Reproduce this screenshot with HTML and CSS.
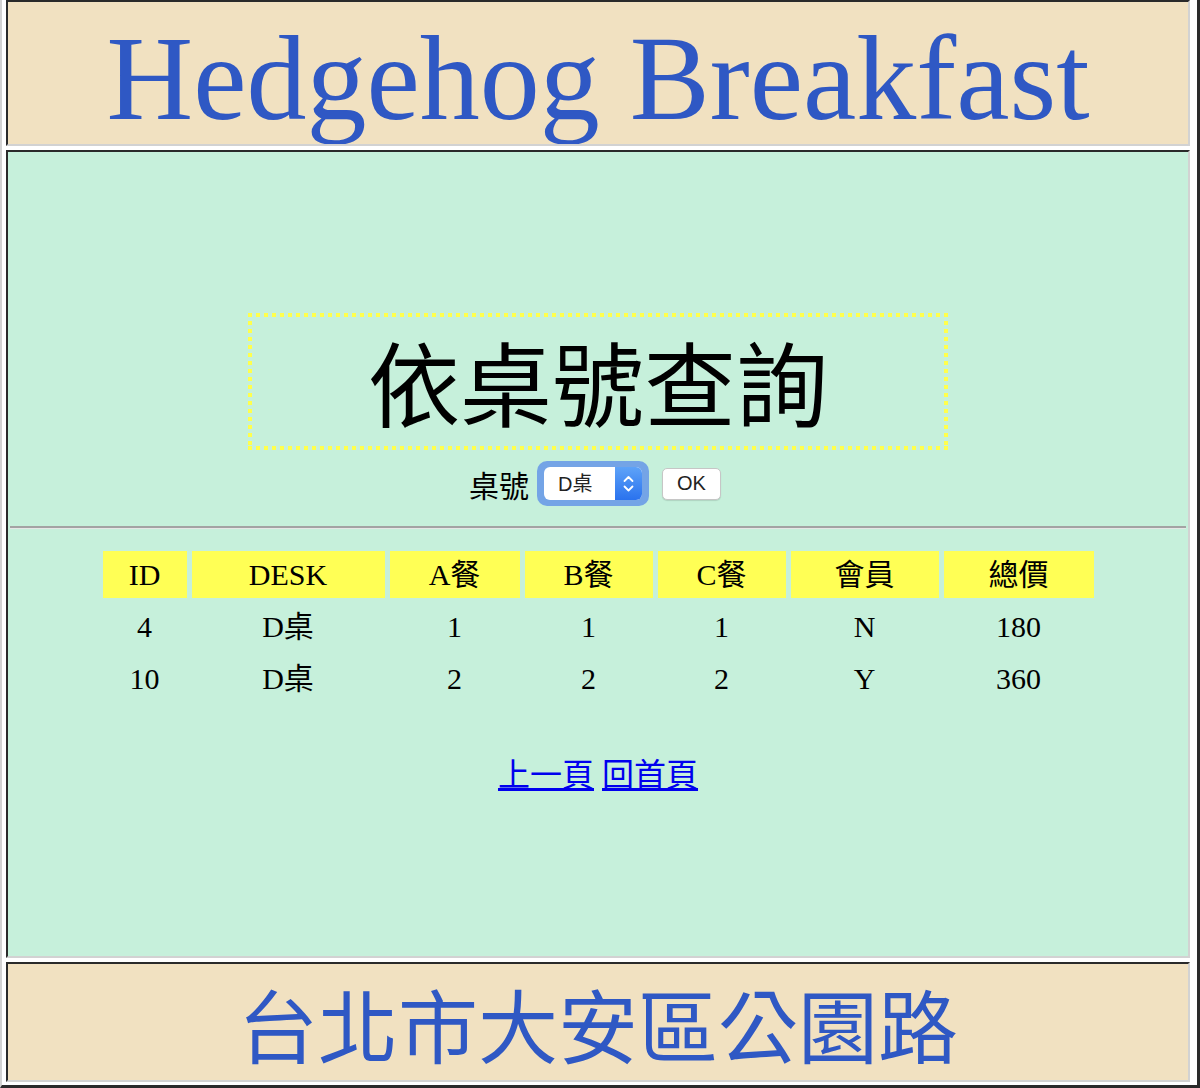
FILE: index.html
```html
<!DOCTYPE html>
<html lang="zh-Hant">
<head>
<meta charset="utf-8">
<title>Hedgehog Breakfast</title>
<link rel="stylesheet" href="styles.css">
</head>
<body>
<div class="page">
  <header class="cell head-cell">Hedgehog Breakfast</header>
  <main class="cell main-cell">
    <h1 class="title-box">依桌號查詢</h1>
    <form class="query-row">
      <label class="query-label" for="desk">桌號</label>
      <span class="select-ring">
        <span class="select-inner">
          <select id="desk" class="desk-select"><option>D桌</option></select>
          <span class="select-arrow">
            <svg width="27" height="33" viewBox="0 0 27 33"><path d="M9.5 14 L13.5 10 L17.5 14" fill="none" stroke="#fff" stroke-width="1.8" stroke-linecap="round" stroke-linejoin="round"/><path d="M9.5 19.5 L13.5 23.5 L17.5 19.5" fill="none" stroke="#fff" stroke-width="1.8" stroke-linecap="round" stroke-linejoin="round"/></svg>
          </span>
        </span>
      </span>
      <button type="button" class="ok-btn">OK</button>
    </form>
    <hr class="divider">
    <table class="orders">
      <colgroup>
        <col class="c-id"><col class="c-desk"><col class="c-a"><col class="c-b"><col class="c-c"><col class="c-mem"><col class="c-total">
      </colgroup>
      <thead>
        <tr><th>ID</th><th>DESK</th><th>A餐</th><th>B餐</th><th>C餐</th><th>會員</th><th>總價</th></tr>
      </thead>
      <tbody>
        <tr><td>4</td><td>D桌</td><td>1</td><td>1</td><td>1</td><td>N</td><td>180</td></tr>
        <tr><td>10</td><td>D桌</td><td>2</td><td>2</td><td>2</td><td>Y</td><td>360</td></tr>
      </tbody>
    </table>
    <p class="nav-links"><a href="#">上一頁</a> <a href="#">回首頁</a></p>
  </main>
  <footer class="cell foot-cell">台北市大安區公園路</footer>
</div>
</body>
</html>
```
FILE: styles.css
```css
html, body {
  margin: 0;
  padding: 0;
  background: #ffffff;
}

body {
  font-family: "Liberation Serif", "Noto Sans CJK TC", serif;
  color: #000;
}

.page {
  box-sizing: border-box;
  width: 1200px;
  height: 1088px;
  border-left: 2px solid #d2d2d2;
  border-right: 3px solid #2a2a2a;
  border-bottom: 3px solid #2a2a2a;
  padding: 0 7px 3px 4px;
  display: flex;
  flex-direction: column;
  gap: 4px;
}

.cell {
  box-sizing: border-box;
  border-top: 2px solid #2a2a2a;
  border-left: 2px solid #2a2a2a;
  border-bottom: 2px solid #d2d2d2;
  border-right: 2px solid #d2d2d2;
}

.head-cell {
  height: 146px;
  background: #f1e1c1;
  color: #2f58c4;
  font-size: 120px;
  line-height: 133px;
  padding-top: 10px;
  text-align: center;
  white-space: nowrap;
  overflow: hidden;
}

.main-cell {
  height: 808px;
  background: #c6f0db;
  padding-top: 161px;
  display: flex;
  flex-direction: column;
  align-items: center;
}

.title-box {
  box-sizing: border-box;
  width: 700px;
  height: 137px;
  margin: 0;
  padding-top: 12px;
  background:
    repeating-linear-gradient(90deg, #ffff4d 0 4px, transparent 4px 8px) left top / 100% 4px no-repeat,
    repeating-linear-gradient(90deg, #ffff4d 0 4px, transparent 4px 8px) left bottom / 100% 4px no-repeat,
    repeating-linear-gradient(180deg, #ffff4d 0 4px, transparent 4px 8px) left top / 4px 100% no-repeat,
    repeating-linear-gradient(180deg, #ffff4d 0 4px, transparent 4px 8px) right top / 4px 100% no-repeat;
  font-family: "Liberation Serif", "Noto Sans CJK TC", serif;
  font-weight: normal;
  font-size: 92px;
  line-height: 128px;
  text-align: center;
  color: #000;
  overflow: hidden;
}

.query-row {
  margin: 11px 0 0 0;
  height: 45px;
  display: flex;
  align-items: center;
  justify-content: center;
}

.query-label {
  font-size: 30px;
  margin-right: 8px;
  margin-left: -6px;
}

.select-ring {
  display: inline-flex;
  padding: 6px 7px;
  border-radius: 10px;
  background: #74a4e6;
}

.select-inner {
  position: relative;
  display: inline-block;
  width: 98px;
  height: 33px;
}

.desk-select {
  -webkit-appearance: none;
  appearance: none;
  box-sizing: border-box;
  width: 98px;
  height: 33px;
  margin: 0;
  border: none;
  border-radius: 6px;
  background: #ffffff;
  padding: 0 0 0 14px;
  font-family: "Liberation Sans", "Noto Sans CJK TC", sans-serif;
  font-size: 20px;
  color: #222;
  outline: none;
}

.select-arrow {
  position: absolute;
  top: 0;
  right: 0;
  width: 27px;
  height: 33px;
  border-radius: 0 6px 6px 0;
  background: linear-gradient(#5ea3f8, #2a72ee);
  display: flex;
}

.ok-btn {
  box-sizing: border-box;
  width: 59px;
  height: 32px;
  margin-left: 13px;
  padding: 0;
  border: 1px solid #c6c6c6;
  border-radius: 5px;
  background: #ffffff;
  box-shadow: 0 1px 1px rgba(0, 0, 0, 0.12);
  font-family: "Liberation Sans", sans-serif;
  font-size: 20px;
  color: #222;
}

.divider {
  align-self: stretch;
  margin: 20px 2px 0 2px;
  height: 0;
  border: none;
  border-top: 2px solid #a3a3a3;
  border-bottom: 1px solid #e6e6e6;
}

.orders {
  margin-top: 17px;
  border-spacing: 5px;
  table-layout: fixed;
  font-size: 30px;
}

.c-id { width: 84px; }
.c-desk { width: 193px; }
.c-a { width: 130px; }
.c-b { width: 128px; }
.c-c { width: 128px; }
.c-mem { width: 148px; }
.c-total { width: 150px; }

.orders th,
.orders td {
  height: 47px;
  padding: 0;
  text-align: center;
  vertical-align: middle;
  font-weight: normal;
  line-height: 47px;
}

.orders th {
  background: #ffff55;
}

.nav-links {
  margin: 45px 0 0 0;
  font-size: 32px;
  line-height: 46px;
}

.nav-links a {
  color: #0000ee;
  text-decoration: underline;
}

.foot-cell {
  height: 120px;
  background: #f1e1c1;
  color: #2f58c4;
  font-family: "Noto Sans CJK TC", sans-serif;
  font-size: 80px;
  display: flex;
  align-items: center;
  justify-content: center;
  line-height: 1;
}
```
